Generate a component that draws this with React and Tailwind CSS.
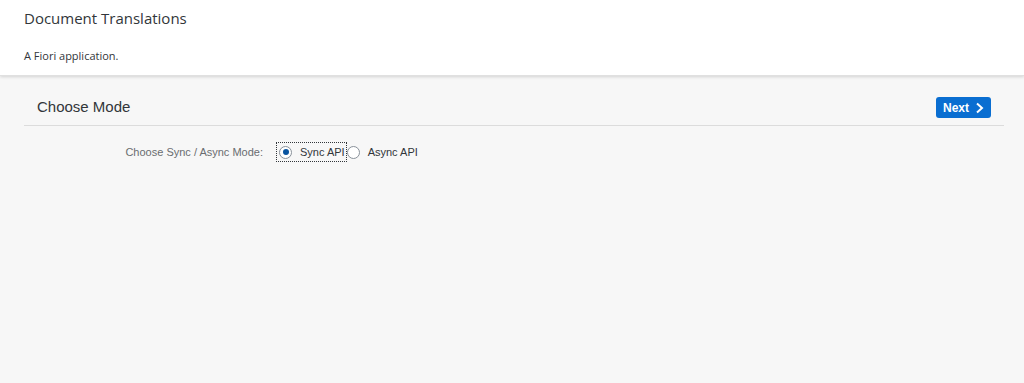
import React, { useState } from "react";

const arial = { fontFamily: '"Liberation Sans", Arial, sans-serif' };

function Radio({ checked, label, focused, onSelect }) {
  return (
    <label
      className={
        focused
          ? "flex items-center h-[20px] pl-[2px] pr-[1px] border border-dotted border-[#32363a] cursor-pointer"
          : "flex items-center h-[20px] cursor-pointer"
      }
      onClick={onSelect}
    >
      <span className="w-[13px] h-[13px] rounded-full border border-[#89919a] bg-white flex items-center justify-center">
        {checked && <span className="w-[6px] h-[6px] rounded-full bg-[#0854a0]" />}
      </span>
      <span className="ml-[8px] text-[11px] text-[#32363a]">{label}</span>
    </label>
  );
}

export default function App() {
  const [mode, setMode] = useState("sync");

  return (
    <div
      className="w-full h-[383px] bg-[#f7f7f7] flex flex-col"
      style={{ fontFamily: '"Open Sans", "Liberation Sans", Arial, sans-serif' }}
    >
      {/* Shell header */}
      <header className="bg-white h-[76px] px-6 pt-[8px] shadow-[0_1px_3px_rgba(0,0,0,0.15)] border-b border-[#e0e0e0]">
        <h1 className="text-[15px] leading-[20px] text-[#32363a]">
          Document Translations
        </h1>
        <p className="mt-[20px] text-[11px] leading-[16px] text-[#32363a]">
          A Fiori application.
        </p>
      </header>

      {/* Wizard step */}
      <section className="ml-6 mr-[20px] mt-[20px]" style={arial}>
        <div className="flex items-start justify-between h-[30px] pl-[13px] pr-[13px] border-b border-[#dcdcdc]">
          <h2 className="pt-[1px] text-[15px] leading-[20px] text-[#32363a]">Choose Mode</h2>
          <button className="mt-[1px] flex items-center gap-[6px] h-[21px] pl-[7px] pr-[7px] rounded-[3px] bg-[#0a6ed1] text-white text-[12px] font-bold">
            Next
            <svg width="9" height="12" viewBox="0 0 9 12" fill="none">
              <path d="M2 1.5 L7 6 L2 10.5" stroke="white" strokeWidth="2" />
            </svg>
          </button>
        </div>

        <div className="flex items-center mt-[16px]">
          <span className="w-[239px] text-right mr-[13px] text-[11px] text-[#6a6d70]">
            Choose Sync / Async Mode:
          </span>
          <Radio
            checked={mode === "sync"}
            focused
            label="Sync API"
            onSelect={() => setMode("sync")}
          />
          <Radio
            checked={mode === "async"}
            label="Async API"
            onSelect={() => setMode("async")}
          />
        </div>
      </section>
    </div>
  );
}
